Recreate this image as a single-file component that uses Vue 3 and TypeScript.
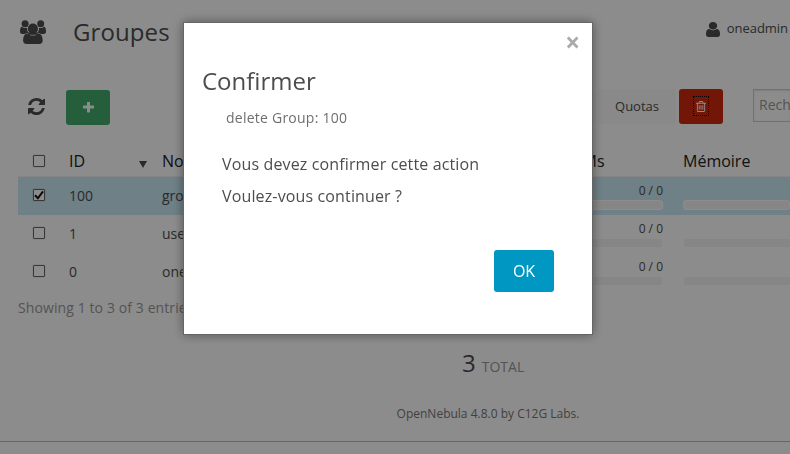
<script setup lang="ts">
import { ref } from 'vue'

interface Group {
  id: number
  name: string
  vms: string
  selected: boolean
}

const groups = ref<Group[]>([
  { id: 100, name: 'groupe', vms: '0 / 0', selected: true },
  { id: 1, name: 'users', vms: '0 / 0', selected: false },
  { id: 0, name: 'oneadmin', vms: '0 / 0', selected: false },
])
</script>

<template>
  <div class="page">
    <header class="topbar">
      <svg class="group-icon" viewBox="0 0 26 24">
        <circle cx="5.1" cy="3.7" r="3.500" />
        <circle cx="20.700" cy="3.700" r="3.500" />
        <path d="M1.800 6.800c1.600 1.300 4 1.500 5.200.9-.1 2.300.5 3.800 1.600 5.200-1.500 0-2.600.3-3.500 1H2.400C.9 13.900 0 13.100 0 11.700 0 9.500.4 6.800 1.800 6.800z" />
        <path d="M24.200 6.800c-1.600 1.300-4 1.500-5.200.9.1 2.300-.5 3.800-1.600 5.200 1.500 0 2.600.3 3.500 1h2.700c1.500 0 2.400-.8 2.400-2.200 0-2.200-.4-4.900-1.800-4.900z" />
        <circle cx="12.900" cy="8.700" r="5.100" />
        <path d="M7.400 13.400c1.600 1.500 3.500 2.200 5.500 2.200s3.900-.7 5.500-2.200c3.300 0 4.300 3.900 4.300 7.200 0 2.200-1.300 3.400-3.300 3.400H6.400c-2 0-3.300-1.200-3.300-3.400 0-3.300 1-7.200 4.300-7.200z" />
        <path d="M8 12.500h9.800v2.300H8z" />
      </svg>
      <h1 class="title">Groupes</h1>
      <div class="user">
        <svg class="user-icon" viewBox="256 128 1280 1536" preserveAspectRatio="none">
          <path d="M1536 1399q0 109-62.5 187t-150.5 78h-854q-88 0-150.5-78t-62.5-187q0-85 8.5-160.5t31.5-152 58.5-131 94-89 134.5-34.5q131 128 313 128t313-128q76 0 134.5 34.500t94 89 58.500 131 31.500 152 8.500 160.500zm-256-887q0 159-112.5 271.5t-271.5 112.5-271.5-112.5-112.5-271.5 112.5-271.5 271.5-112.5 271.5 112.5 112.5 271.5z" />
        </svg>
        <span>oneadmin</span>
      </div>
    </header>

    <div class="toolbar">
      <svg class="refresh-icon" viewBox="128 128 1536 1536">
        <path d="M1639 1056q0 5-1 7-64 268-268 434.5t-478 166.5q-146 0-282.5-55t-243.5-157l-129 129q-19 19-45 19t-45-19-19-45v-448q0-26 19-45t45-19h448q26 0 45 19t19 45-19 45l-137 137q71 66 161 102t187 36q134 0 250-65t186-179q11-17 53-117 8-23 30-23h192q13 0 22.500 9.500t9.500 22.500zm25-800v448q0 26-19 45t-45 19h-448q-26 0-45-19t-19-45 19-45l138-138q-148-137-349-137-134 0-250 65t-186 179q-11 17-53 117-8 23-30 23h-199q-13 0-22.500-9.500t-9.500-22.500v-7q65-268 270-434.500t480-166.500q146 0 284 55.500t245 156.500l130-129q19-19 45-19t45 19 19 45z" />
      </svg>
      <button class="btn add" type="button">
        <svg viewBox="192 192 1408 1408">
          <path d="M1600 736v192q0 40-28 68t-68 28h-416v416q0 40-28 68t-68 28h-192q-40 0-68-28t-28-68v-416h-416q-40 0-68-28t-28-68v-192q0-40 28-68t68-28h416v-416q0-40 28-68t68-28h192q40 0 68 28t28 68v416h416q40 0 68 28t28 68z" />
        </svg>
      </button>
      <div class="actions">
        <button class="btn plain side" type="button"></button>
        <button class="btn plain quotas" type="button">Quotas</button>
        <button class="btn delete" type="button">
          <span class="focus">
            <svg viewBox="192 128 1408 1536">
              <path d="M704 736v576q0 14-9 23t-23 9h-64q-14 0-23-9t-9-23v-576q0-14 9-23t23-9h64q14 0 23 9t9 23zm256 0v576q0 14-9 23t-23 9h-64q-14 0-23-9t-9-23v-576q0-14 9-23t23-9h64q14 0 23 9t9 23zm256 0v576q0 14-9 23t-23 9h-64q-14 0-23-9t-9-23v-576q0-14 9-23t23-9h64q14 0 23 9t9 23zm128 724v-948h-896v948q0 22 7 40.500t14.500 27 10.500 8.500h832q3 0 10.500-8.500t14.500-27 7-40.500zm-672-1076h448l-48-117q-7-9-17-11h-317q-10 2-17 11zm928 32v64q0 14-9 23t-23 9h-96v948q0 83-47 143.500t-113 60.500h-832q-66 0-113-58.500t-47-141.500v-952h-96q-14 0-23-9t-9-23v-64q0-14 9-23t23-9h309l70-167q15-37 54-63t79-26h320q40 0 79 26t54 63l70 167h309q14 0 23 9t9 23z" />
            </svg>
          </span>
        </button>
      </div>
      <div class="search">Rech</div>
    </div>

    <div class="table">
      <div class="row head">
        <span class="box"></span>
        <span class="id-head">ID <i class="sort"></i></span>
        <span>Nom</span>
        <span class="vms-head">VMs</span>
        <span class="mem-head">Mémoire</span>
      </div>
      <div v-for="g in groups" :key="g.id" class="row" :class="{ selected: g.selected }">
        <span class="box">
          <svg v-if="g.selected" viewBox="0 0 10 10"><path d="M1 5.200 3.900 8.300 9 1.300" /></svg>
        </span>
        <span class="cell">{{ g.id }}</span>
        <span class="cell">{{ g.name }}</span>
        <span class="usage"><span>{{ g.vms }}</span><i class="bar"></i></span>
        <span class="usage mem"><span></span><i class="bar"></i></span>
      </div>
    </div>
    <div class="info">Showing 1 to 3 of 3 entries</div>

    <div class="total"><span class="count">3</span><span class="label">TOTAL</span></div>
    <footer class="footer">OpenNebula 4.8.0 by C12G Labs.</footer>
  </div>

  <div class="overlay">
    <section class="modal" role="dialog">
      <span class="close">×</span>
      <h2>Confirmer</h2>
      <p class="subject">delete Group: 100</p>
      <p class="line">Vous devez confirmer cette action</p>
      <p class="line">Voulez-vous continuer ?</p>
      <button class="ok" type="button">OK</button>
    </section>
  </div>
</template>

<style>
body {
  overflow: hidden;
  background: #fff;
}
</style>

<style scoped>
.page,
.overlay {
  box-sizing: border-box;
  width: 790px;
  height: 454px;
  overflow: hidden;
  font-family: "Open Sans", "Noto Sans", sans-serif;
  color: #4d4d4d;
}
.page *,
.overlay * {
  box-sizing: border-box;
}
h1,
h2,
p {
  margin: 0;
  font-weight: 400;
}
svg {
  display: block;
  fill: currentColor;
}
button {
  border: 0;
  padding: 0;
  font-family: inherit;
}
.topbar {
  display: flex;
  height: 88px;
  padding-left: 20px;
  color: #4d4d4d;
}
.group-icon {
  width: 26px;
  height: 24px;
  margin-top: 20px;
}
.title {
  margin: 15px 0 0 27px;
  font-size: 24px;
  line-height: 34px;
  letter-spacing: .1px;
}
.user {
  display: flex;
  align-items: center;
  height: 20px;
  margin: 18px 2px 0 auto;
  gap: 7px;
  font-size: 13px;
  letter-spacing: -.05px;
}
.user-icon {
  width: 14px;
  height: 15px;
  margin-top: 2px;
}
.toolbar {
  display: flex;
  height: 57px;
  padding-left: 28px;
}
.refresh-icon {
  width: 17px;
  height: 17px;
  margin-top: 10px;
}
.btn {
  display: flex;
  align-items: center;
  justify-content: center;
  height: 35px;
  border-radius: 3px;
  color: #fff;
}
.add {
  width: 44px;
  margin: 2px 0 0 21px;
  background: #43ac6a;
}
.add svg {
  width: 11px;
  height: 11px;
  margin-bottom: 1px;
}
.actions {
  display: flex;
  gap: 3px;
  margin: 1px 0 0 auto;
}
.plain {
  background: #fafafa;
  color: #4d4d4d;
}
.side {
  width: 60px;
}
.quotas {
  width: 78px;
  padding-bottom: 2px;
  font-size: 13px;
}
.delete {
  width: 44px;
  background: #cf2a0e;
}
.focus {
  display: flex;
  align-items: center;
  justify-content: center;
  width: 16px;
  height: 20px;
  margin-top: -1px;
  border: 1px dotted #000;
}
.focus svg {
  width: 10px;
  height: 11px;
}
.search {
  width: 37px;
  height: 33px;
  margin: 1px 0 0 30px;
  padding-left: 5px;
  border: 1px solid #ccc;
  border-right: 0;
  box-shadow: inset 0 1px 2px rgba(0, 0, 0, .1);
  font-size: 14px;
  line-height: 30px;
  color: #999;
  overflow: hidden;
}
.table {
  margin-left: 18px;
}
.row {
  display: grid;
  grid-template-columns: 51px 93px 408px 93px 127px;
  height: 38px;
  align-items: center;
}
.head {
  height: 32px;
  border-bottom: 1px solid #f0f0f0;
  font-size: 16px;
  color: #222;
}
.selected {
  background: #cae9f5;
}
.box {
  width: 12px;
  height: 12px;
  margin-left: 15px;
  border: 1px solid #666;
  border-radius: 1px;
  box-shadow: 0 0 0 1px rgba(0, 0, 0, .05);
  background: #fff;
}
.row:not(.head) .box {
  margin-bottom: 2px;
}
.box svg {
  width: 10px;
  height: 10px;
  fill: none;
  stroke: #111;
  stroke-width: 2;
}
.id-head {
  display: flex;
  align-items: center;
}
.sort {
  margin: 7px 15px 0 auto;
  border: 4px solid transparent;
  border-top: 7px solid #4d4d4d;
  border-bottom: 0;
}
.cell {
  padding-bottom: 2px;
  font-size: 14px;
}
.vms-head {
  margin-left: 3px;
}
.mem-head {
  margin-left: 20px;
}
.usage {
  display: flex;
  flex-direction: column;
  height: 38px;
  padding: 5px 0 0;
  font-size: 12px;
  line-height: 18px;
  text-align: right;
}
.usage > span {
  height: 18px;
}
.mem {
  margin-left: 21px;
}
.bar {
  height: 8px;
  margin: 1px 1px 0 0;
  border-radius: 2px;
  background: #f5f5f5;
}
.mem .bar {
  margin-right: 0;
}
.selected .mem {
  margin-left: 20px;
}
.selected .bar {
  height: 10px;
  margin: 0;
  border: 1px solid #fff;
  border-radius: 3px;
}
.info {
  margin: 7px 0 0 18px;
  font-size: 14px;
  line-height: 20px;
  letter-spacing: .1px;
  color: #999;
}
.total {
  display: flex;
  align-items: baseline;
  height: 34px;
  margin: 28px 0 0 462px;
  gap: 6px;
}
.count {
  font-size: 24px;
  line-height: 34px;
}
.label {
  font-size: 14px;
  color: #999;
}
.footer {
  height: 62px;
  padding: 26px 0 0 186px;
  border-bottom: 1px solid #bbb;
  font-size: 12px;
  line-height: 16px;
  text-align: center;
  color: #777;
}
.overlay {
  position: fixed;
  inset: 0;
  padding: 22px 0 0 183px;
  background: rgba(0, 0, 0, .45);
}
.modal {
  display: flex;
  flex-direction: column;
  width: 410px;
  height: 313px;
  border: 1px solid #666;
  background: #fff;
  box-shadow: 0 0 10px rgba(0, 0, 0, .4);
}
.close {
  align-self: flex-end;
  height: 22px;
  margin: 8px 12px 0 0;
  font-size: 26px;
  font-weight: 700;
  line-height: 22px;
  color: #aaa;
}
h2 {
  margin: 11px 0 0 18px;
  font-size: 24px;
  line-height: 34px;
}
.subject {
  margin: 10px 0 20px 42px;
  font-size: 14px;
  line-height: 20px;
  letter-spacing: .24px;
  color: #6f6f6f;
}
.line {
  margin-left: 38px;
  font-size: 16px;
  line-height: 32px;
  letter-spacing: .14px;
}
.ok {
  width: 60px;
  height: 42px;
  margin: 38px 38px 0 auto;
  border-radius: 3px;
  background: #0098c3;
  color: #fff;
  font-size: 16px;
}
</style>
